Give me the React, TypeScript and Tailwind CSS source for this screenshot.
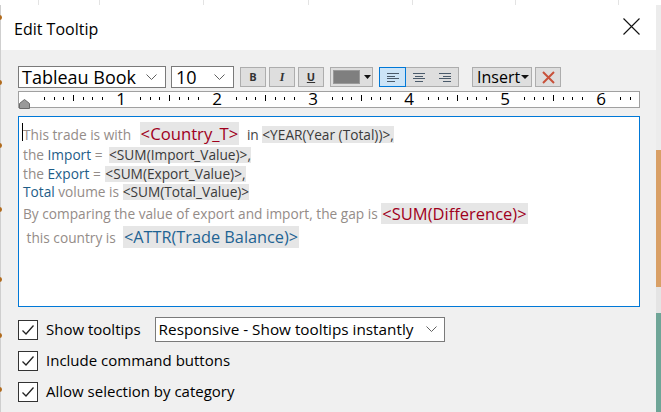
import React from "react";

const ui = { fontFamily: '"Open Sans", "Noto Sans", sans-serif' };
const ed = { fontFamily: '"Open Sans", "Noto Sans", sans-serif' };

function Chevron({ className = "" }: { className?: string }) {
  return (
    <svg width="11" height="7" viewBox="0 0 11 7" className={className}>
      <path d="M0.5 0.5 L5.5 5.5 L10.5 0.5" fill="none" stroke="#606060" strokeWidth="1" />
    </svg>
  );
}

function Check() {
  return (
    <div className="w-[20px] h-[20px] border border-[#333] bg-white flex items-center justify-center">
      <svg width="14" height="12" viewBox="0 0 14 12">
        <path d="M1.5 6.5 L5 10 L12.5 1.5" fill="none" stroke="#222" strokeWidth="1.3" />
      </svg>
    </div>
  );
}

function Ruler() {
  const ticks: React.ReactNode[] = [];
  const x0 = 6;
  for (let k = 0; k < 7; k++) {
    const base = x0 + 96 * k;
    [0.2, 0.3, 0.4, 0.6, 0.7, 0.8].forEach((t) => {
      const x = Math.round(base + 96 * t) + 0.5;
      if (x < 620) ticks.push(<line key={`s${k}${t}`} x1={x} x2={x} y1={5} y2={8} stroke="#000" strokeWidth="1" />);
    });
    const hx = Math.round(base + 48) + 0.5;
    if (hx < 620) ticks.push(<line key={`h${k}`} x1={hx} x2={hx} y1={3} y2={9} stroke="#000" strokeWidth="1" />);
  }
  return (
    <div className="relative h-[17px] border border-[#a0a0a0] bg-white">
      <svg width="619" height="15" className="block">
        {ticks}
      </svg>
      {[1, 2, 3, 4, 5, 6].map((k) => (
        <span
          key={k}
          className="absolute top-[-2px] w-[12px] -ml-[6px] text-center text-[17px] leading-[18px] text-black"
          style={{ left: 6 + 96 * k }}
        >
          {k}
        </span>
      ))}
      <svg width="11" height="10" viewBox="0 0 11 10" className="absolute left-[0px] top-[7px]">
        <path d="M0.5 9.5 L0.5 4.5 L5.5 0.5 L10.5 4.5 L10.5 9.5 Z" fill="#9a9a9a" stroke="#6a6a6a" strokeWidth="1" />
      </svg>
    </div>
  );
}

export default function App() {
  const gray = "text-[#948c88]";
  const blue = "text-[#1e5d88]";
  const tag = "bg-[#e6e6e6] text-[#3a3a3a]";
  return (
    <div className="w-[661px] h-[412px] overflow-hidden bg-white relative flex flex-col" style={ui}>
      {/* top background strip */}
      <div className="h-[5px] flex-none relative bg-white">
        {[38, 99, 203, 308, 412, 515, 618].map((x) => (
          <div key={x} className="absolute top-0 h-[5px] w-px bg-[#e3e3e3]" style={{ left: x }} />
        ))}
      </div>
      <div className="flex flex-1">
        {/* Dialog */}
        <div className="w-[656px] flex flex-col bg-[#f0f0f0] border-l border-[#cfcfcf]">
          <div className="h-[45px] bg-white flex items-center justify-between pl-[13px] pr-[16px]">
            <span className="text-[16px] text-black leading-none mt-[2px]">Edit Tooltip</span>
            <svg width="17" height="17" viewBox="0 0 17 17" className="-mt-[2px]">
              <path d="M0.5 0.5 L16.5 16.5 M16.5 0.5 L0.5 16.5" stroke="#111" strokeWidth="1.1" fill="none" />
            </svg>
          </div>
          <div className="flex flex-col pl-[17px] pr-[16px]">
            {/* toolbar */}
            <div className="flex items-center h-[22px] mt-[16px]">
              <div className="w-[148px] h-[22px] bg-white border border-[#7a7a7a] flex items-center justify-between pl-[3px] pr-[8px]">
                <span className="text-[18px] leading-none text-black">Tableau Book</span>
                <Chevron />
              </div>
              <div className="ml-[5px] w-[63px] h-[22px] bg-white border border-[#7a7a7a] flex items-center justify-between pl-[4px] pr-[8px]">
                <span className="text-[18px] leading-none text-black">10</span>
                <Chevron />
              </div>
              <div className="ml-[6px] w-[26px] h-[20px] bg-[#dedede] border border-[#adadad] flex items-center justify-center text-[11px] font-bold text-[#333]">B</div>
              <div className="ml-[3px] w-[26px] h-[20px] bg-[#dedede] border border-[#adadad] flex items-center justify-center text-[12px] font-bold italic text-[#333]" style={{ fontFamily: '"Liberation Serif", serif' }}>I</div>
              <div className="ml-[3px] w-[26px] h-[20px] bg-[#dedede] border border-[#adadad] flex items-center justify-center text-[11px] font-bold underline text-[#333]">U</div>
              <div className="ml-[6px] w-[43px] h-[20px] bg-[#dedede] border border-[#adadad] flex items-center pl-[2px]">
                <div className="w-[27px] h-[14px] bg-[#7f7f7f] border border-[#9a9a9a]" />
                <svg width="7" height="4" viewBox="0 0 7 4" className="ml-[4px]">
                  <path d="M0 0 L7 0 L3.5 4 Z" fill="#111" />
                </svg>
              </div>
              <div className="ml-[6px] flex h-[20px] border border-[#adadad] bg-[#dedede]">
                {[0, 1, 2].map((i) => (
                  <div
                    key={i}
                    className={
                      i === 0
                        ? "w-[27px] h-[20px] -mt-px -ml-px bg-[#cce4f7] border border-[#0078d7] flex items-center justify-center"
                        : "w-[26px] h-[18px] flex items-center justify-center"
                    }
                  >
                    <svg width="12" height="9" viewBox="0 0 12 9">
                      {i === 0 && <path d="M0 0.5H12M0 3.5H8M0 5.5H12M0 8.5H8" stroke="#4a5a6a" strokeWidth="1" />}
                      {i === 1 && <path d="M0 0.5H12M2 3.5H10M0 5.5H12M2 8.5H10" stroke="#4a5a6a" strokeWidth="1" />}
                      {i === 2 && <path d="M0 0.5H12M4 3.5H12M0 5.5H12M4 8.5H12" stroke="#4a5a6a" strokeWidth="1" />}
                    </svg>
                  </div>
                ))}
              </div>
              <div className="ml-[13px] w-[60px] h-[20px] bg-[#dedede] border border-[#adadad] flex items-center pl-[4px]">
                <span className="text-[16px] leading-none text-black">Insert</span>
                <svg width="8" height="4" viewBox="0 0 8 4" className="ml-[1px]">
                  <path d="M0 0 L8 0 L4 4 Z" fill="#111" />
                </svg>
              </div>
              <div className="ml-[3px] w-[26px] h-[20px] bg-[#dedede] border border-[#adadad] flex items-center justify-center">
                <svg width="13" height="13" viewBox="0 0 13 13">
                  <path d="M1 1 L12 12 M12 1 L1 12" stroke="#c8513a" strokeWidth="2" />
                </svg>
              </div>
            </div>
            {/* ruler */}
            <div className="mt-[3px]">
              <Ruler />
            </div>
            {/* editor */}
            <div className="mt-[8px] h-[191px] bg-white border border-[#0078d7] pl-[4px] pt-[4px] text-[13.7px]" style={ed}>
              <div className="h-[24px] flex items-end whitespace-pre">
                <span className="relative leading-[17px] mb-[2px]">
                  <span className="absolute -left-[1px] top-[-3px] w-px h-[18px] bg-black" />
                  <span className={gray}>This trade is with </span>
                </span>
                <span className="ml-[5px] bg-[#e6e6e6] text-[#a0001c] text-[16.7px] leading-[23px] px-[1px]">{"<Country_T>"}</span>
                <span className="ml-[4px] text-[#444] leading-[17px] mb-[2px]"> in </span>
                <span className={`${tag} leading-[17px] mb-[2px]`}>{"<YEAR(Year (Total))>,"}</span>
              </div>
              <div className="h-[19px] flex items-center whitespace-pre leading-[16px]">
                <span className={gray}>the </span>
                <span className={blue}>Import</span>
                <span className={gray}> = </span>
                <span className={`${tag} ml-[3px]`}>{"<SUM(Import_Value)>,"}</span>
              </div>
              <div className="h-[19px] flex items-center whitespace-pre leading-[16px]">
                <span className={gray}>the </span>
                <span className={blue}>Export</span>
                <span className={gray}> = </span>
                <span className={`${tag} ml-[1px]`}>{"<SUM(Export_Value)>,"}</span>
              </div>
              <div className="h-[18px] flex items-center whitespace-pre leading-[16px]">
                <span className={blue}>Total</span>
                <span className={gray}> volume is </span>
                <span className={tag}>{"<SUM(Total_Value)>"}</span>
              </div>
              <div className="h-[23px] flex items-end whitespace-pre">
                <span className={`${gray} leading-[17px] mb-[2px]`}>By comparing the value of export and import, the gap is </span>
                <span className="bg-[#e6e6e6] text-[#a0001c] text-[16.5px] leading-[21px] px-[1px]">{"<SUM(Difference)>"}</span>
              </div>
              <div className="h-[24px] flex items-end whitespace-pre">
                <span className={`${gray} leading-[17px] mb-[2px]`}> this country is  </span>
                <span className="bg-[#e6e6e6] text-[#1e6393] text-[16.3px] leading-[22px] px-[1px]">{"<ATTR(Trade Balance)>"}</span>
              </div>
            </div>
            {/* options */}
            <div className="mt-[12px] flex flex-col gap-[10px]">
              <div className="flex items-center h-[21px]">
                <Check />
                <span className="ml-[8px] text-[15px] text-black leading-none">Show tooltips</span>
                <div className="ml-[14px] w-[290px] h-[25px] bg-white border border-[#7a7a7a] flex items-center justify-between pl-[3px] pr-[7px]">
                  <span className="text-[15.3px] leading-none text-black">Responsive - Show tooltips instantly</span>
                  <Chevron />
                </div>
              </div>
              <div className="flex items-center h-[21px]">
                <Check />
                <span className="ml-[8px] text-[15px] text-black leading-none">Include command buttons</span>
              </div>
              <div className="flex items-center h-[21px]">
                <Check />
                <span className="ml-[8px] text-[15px] text-black leading-none">Allow selection by category</span>
              </div>
            </div>
          </div>
        </div>
        {/* right background strip */}
        <div className="w-[5px] flex flex-col">
          <div className="h-[145px] bg-[#ececec]" />
          <div className="h-[137px] bg-[#d9a066]" />
          <div className="h-[26px] bg-[#e4e4e4]" />
          <div className="flex-1 bg-[#6fa597]" />
        </div>
      </div>
      {/* background dots peeking at left edge */}
      {[15, 80, 143, 207, 277, 333, 387].map((y) => (
        <div key={y} className="absolute -left-[3px] w-[5px] h-[5px] rounded-full bg-[#b06a1c]" style={{ top: y }} />
      ))}
    </div>
  );
}
